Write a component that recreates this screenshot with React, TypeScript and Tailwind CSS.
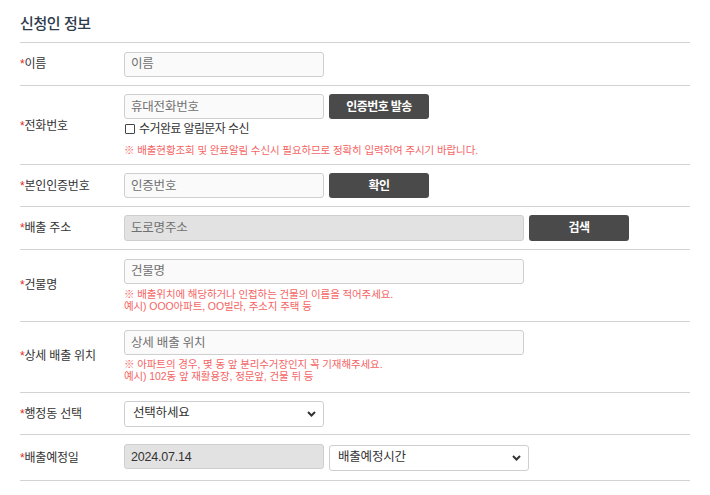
import React from "react";

export interface RowProps {
  label: string;
  className?: string;
  children?: React.ReactNode;
}

const Row: React.FC<RowProps> = ({ label, className = "", children }) => {
  return (
    <div
      className={`grid grid-cols-[104px_1fr] items-center border-b border-[#d3d3d3] ${className}`}
    >
      <div className="text-[12px] tracking-[-0.2px] text-[#333]">
        <span className="text-[#e32b2b]">*</span>
        {label}
      </div>
      <div>{children}</div>
    </div>
  );
};

const Chevron = () => (
  <svg
    width="9"
    height="6"
    viewBox="0 0 9 6"
    className="pointer-events-none absolute right-[8px] top-1/2 -translate-y-1/2"
  >
    <path d="M1 1l3.5 3.5L8 1" fill="none" stroke="#333" strokeWidth="2" />
  </svg>
);

const App: React.FC = () => {
  // base field style, background is given per field
  const inputCls =
    "h-[25px] rounded-[3px] border border-[#cfcfcf] px-[6px] text-[12.5px] tracking-[-0.2px] text-[#333] outline-none placeholder:text-[#707070] disabled:opacity-100";
  const btnCls =
    "w-[100px] rounded-[3px] bg-[#4a4a4a] text-[12px] font-bold tracking-[-0.6px] text-white";
  const selectCls =
    "h-[26px] w-[200px] appearance-none rounded-[3px] border border-[#cfcfcf] bg-white pl-[8px] text-[12.5px] tracking-[-0.2px] text-[#333] outline-none";
  const noteCls = "text-[10.5px] tracking-[-0.1px] text-[#f46464]";

  return (
    <div className="h-[495px] w-[710px] bg-white px-5 font-['Liberation_Sans','Noto_Sans_CJK_KR',sans-serif]">
      <div className="h-[43px] border-b border-[#d3d3d3] pt-[14px] text-[15px] font-medium leading-[20px] tracking-[-0.4px] text-[#2e3b4c]">
        신청인 정보
      </div>

      <Row label="이름" className="h-[43px]">
        <input className={`${inputCls} w-[200px] bg-[#fafafa]`} placeholder="이름" />
      </Row>

      <Row label="전화번호" className="pt-2 pb-[6px]">
        <div className="flex gap-[5px]">
          <input className={`${inputCls} w-[200px] bg-[#fafafa]`} placeholder="휴대전화번호" />
          <button className={`${btnCls} h-[25px]`}>인증번호 발송</button>
        </div>
        <div className="flex h-[20px] items-center text-[12px] tracking-[-0.6px] text-[#333]">
          <span className="ml-[1px] mr-[4px] h-[10px] w-[10px] rounded-[1px] border border-[#444] bg-white" />
          수거완료 알림문자 수신
        </div>
        <p className={`mt-[3px] leading-[16px] ${noteCls}`}>
          ※ 배출현황조회 및 완료알림 수신시 필요하므로 정확히 입력하여 주시기 바랍니다.
        </p>
      </Row>

      <Row label="본인인증번호" className="h-[42px]">
        <div className="flex gap-[5px]">
          <input className={`${inputCls} w-[200px] bg-[#fafafa]`} placeholder="인증번호" />
          <button className={`${btnCls} h-[25px]`}>확인</button>
        </div>
      </Row>

      <Row label="배출 주소" className="h-[43px]">
        <div className="flex gap-[5px]">
          <input
            className={`${inputCls} h-[26px] w-[400px] bg-[#e2e2e2]`}
            placeholder="도로명주소"
            disabled
          />
          <button className={`${btnCls} h-[26px]`}>검색</button>
        </div>
      </Row>

      <Row label="건물명" className="pt-2 pb-[9px]">
        <input className={`${inputCls} w-[400px] bg-[#fafafa]`} placeholder="건물명" />
        <p className={`mt-[4px] leading-[12px] ${noteCls}`}>
          ※ 배출위치에 해당하거나 인접하는 건물의 이름을 적어주세요.
          <br />
          예시) OOO아파트, OO빌라, 주소지 주택 등
        </p>
      </Row>

      <Row label="상세 배출 위치" className="pt-2 pb-[10px]">
        <input className={`${inputCls} w-[400px] bg-[#fafafa]`} placeholder="상세 배출 위치" />
        <p className={`mt-[3px] leading-[12px] ${noteCls}`}>
          ※ 아파트의 경우, 몇 동 앞 분리수거장인지 꼭 기재해주세요.
          <br />
          예시) 102동 앞 재활용장, 정문앞, 건물 뒤 등
        </p>
      </Row>

      <Row label="행정동 선택" className="h-[42px]">
        <div className="relative w-[200px]">
          <select className={selectCls} defaultValue="">
            <option value="">선택하세요</option>
          </select>
          <Chevron />
        </div>
      </Row>

      <Row label="배출예정일" className="h-[46px]">
        <div className="flex gap-[5px]">
          <input
            className={`${inputCls} w-[200px] bg-[#e2e2e2]`}
            defaultValue="2024.07.14"
            disabled
          />
          <div className="relative w-[200px]">
            <select className={selectCls} defaultValue="">
              <option value="">배출예정시간</option>
            </select>
            <Chevron />
          </div>
        </div>
      </Row>
    </div>
  );
};

export default App;
